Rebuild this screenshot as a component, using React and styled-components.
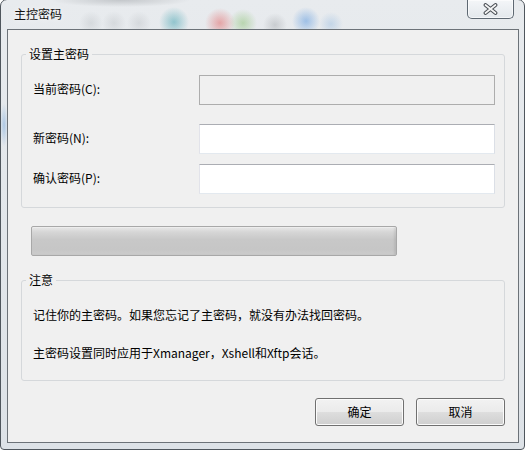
import React from "react";
import styled, { createGlobalStyle } from "styled-components";

const GlobalStyle = createGlobalStyle`
  html, body {
    margin: 0;
    padding: 0;
    overflow: hidden;
    background: #ffffff;
  }
  body {
    font-family: "Noto Sans CJK SC", "Liberation Sans", sans-serif;
    font-size: 12px;
    color: #000000;
  }
`;

const CloseGlyph = () => (
  <svg width="15" height="12" viewBox="0 0 15 12">
    <path d="M2.5 2 L12.5 10 M12.5 2 L2.5 10" stroke="#4a4f55" strokeWidth="3.8" strokeLinecap="round" fill="none" />
    <path d="M2.5 2 L12.5 10 M12.5 2 L2.5 10" stroke="#f6f6f6" strokeWidth="1.7" strokeLinecap="round" fill="none" />
  </svg>
);

const App = () => {
  return (
    <>
      <GlobalStyle />
      <Window>
        <TitleBar>
          <Title>主控密码</Title>
          <CloseButton>
            <CloseGlyph />
          </CloseButton>
        </TitleBar>
        <Client>
          <GroupBox>
            <Legend>设置主密码</Legend>
            <GroupBody>
              <Row>
                <Label>当前密码(C):</Label>
                <Input type="password" disabled />
              </Row>
              <Row $gap={19}>
                <Label>新密码(N):</Label>
                <Input type="password" />
              </Row>
              <Row $gap={10}>
                <Label>确认密码(P):</Label>
                <Input type="password" />
              </Row>
            </GroupBody>
          </GroupBox>
          <Strength />
          <GroupBox $top={16}>
            <Legend>注意</Legend>
            <NoteBody>
              <Note>记住你的主密码。如果您忘记了主密码，就没有办法找回密码。</Note>
              <Note $gap={22}>主密码设置同时应用于Xmanager，Xshell和Xftp会话。</Note>
            </NoteBody>
          </GroupBox>
          <Buttons>
            <Button>确定</Button>
            <Button>取消</Button>
          </Buttons>
        </Client>
      </Window>
    </>
  );
};

const Window = styled.div`
  width: 525px;
  height: 451px;
  margin-top: -1px;
  box-sizing: border-box;
  border: 1px solid #4f565d;
  border-radius: 7px 7px 4px 4px;
  padding: 0 5px 6px 6px;
  display: flex;
  flex-direction: column;
  background:
    radial-gradient(circle 15px at 173px 22px, rgba(40, 150, 165, 0.45), transparent),
    radial-gradient(circle 15px at 219px 23px, rgba(225, 80, 80, 0.45), transparent),
    radial-gradient(circle 14px at 242px 23px, rgba(120, 185, 90, 0.42), transparent),
    radial-gradient(circle 12px at 274px 25px, rgba(120, 125, 130, 0.28), transparent),
    radial-gradient(circle 14px at 305px 21px, rgba(70, 140, 220, 0.45), transparent),
    radial-gradient(circle 12px at 330px 24px, rgba(120, 170, 220, 0.32), transparent),
    radial-gradient(circle 12px at 90px 23px, rgba(150, 155, 160, 0.22), transparent),
    radial-gradient(circle 12px at 113px 23px, rgba(150, 155, 160, 0.22), transparent),
    radial-gradient(circle 12px at 138px 23px, rgba(150, 155, 160, 0.22), transparent),
    radial-gradient(ellipse 70px 7px at 120px 0px, rgba(110, 115, 120, 0.3), transparent),
    radial-gradient(ellipse 4px 22px at 3px 125px, rgba(90, 150, 215, 0.4), transparent),
    linear-gradient(180deg, #e8ebee 0%, #e3e7eb 40%, #dde2e7 100%);
`;

const TitleBar = styled.div`
  height: 29px;
  flex-shrink: 0;
  display: flex;
  justify-content: space-between;
  align-items: flex-start;
  padding-left: 7px;
`;

const Title = styled.div`
  align-self: center;
  padding-bottom: 1px;
  font-size: 12px;
  line-height: 16px;
  color: #111111;
  text-shadow: 0 0 6px rgba(255, 255, 255, 0.9);
`;

const CloseButton = styled.div`
  width: 47px;
  height: 19px;
  box-sizing: border-box;
  margin-right: 5px;
  border: 1px solid #5e6872;
  border-top: none;
  border-radius: 0 0 5px 5px;
  background: linear-gradient(180deg, rgba(246, 248, 250, 0.85) 0%, rgba(226, 231, 236, 0.8) 100%);
  box-shadow: inset 0 0 0 1px rgba(255, 255, 255, 0.6);
  display: flex;
  align-items: center;
  justify-content: center;
`;

const Client = styled.div`
  flex: 1;
  display: flex;
  flex-direction: column;
  border: 1px solid #6c7278;
  background: #f0f0f0;
  padding: 16px 13px 0 13px;
`;

const GroupBox = styled.fieldset`
  margin: ${(p) => p.$top || 0}px 0 0 0;
  padding: 0;
  border: 1px solid #d5d8db;
  border-radius: 3px;
  min-width: 0;
`;

const Legend = styled.legend`
  margin-left: 4px;
  padding: 0 3px;
  font-size: 12px;
  line-height: 16px;
  color: #000000;
`;

const GroupBody = styled.div`
  padding: 13px 9px 13px 11px;
`;

const Row = styled.div`
  display: flex;
  align-items: center;
  justify-content: space-between;
  margin-top: ${(p) => p.$gap || 0}px;
`;

const Label = styled.span`
  font-size: 12px;
  line-height: 16px;
  padding-bottom: 3px;
`;

const Input = styled.input`
  width: 296px;
  height: 30px;
  box-sizing: border-box;
  margin: 0;
  padding: 0 4px;
  border: 1px solid;
  border-color: #abadb3 #dbdfe6 #e3e9ef #e2e3ea;
  background: #ffffff;
  outline: none;

  &:disabled {
    background: #f0f0f0;
    border-color: #adadad;
  }
`;

const Strength = styled.div`
  width: 366px;
  height: 30px;
  box-sizing: border-box;
  margin: 18px 0 0 10px;
  border: 1px solid #a8a8a8;
  border-radius: 2px;
  background: linear-gradient(180deg, #e9e9e9 0%, #d6d6d6 18%, #c8c8c8 45%, #c6c6c6 80%, #cdcdcd 100%);
  box-shadow: inset -2px 0 2px rgba(0, 0, 0, 0.08), inset 0 1px 0 #f2f2f2;
`;

const NoteBody = styled.div`
  padding: 19px 9px 19px 11px;
`;

const Note = styled.div`
  font-size: 12px;
  line-height: 16px;
  margin-top: ${(p) => p.$gap || 0}px;
  white-space: nowrap;
`;

const Buttons = styled.div`
  display: flex;
  justify-content: flex-end;
  gap: 12px;
  margin-top: 17px;
`;

const Button = styled.button`
  width: 89px;
  height: 28px;
  box-sizing: border-box;
  margin: 0;
  padding: 0 0 2px;
  border: 1px solid #707070;
  border-radius: 3px;
  background: linear-gradient(180deg, #f2f2f2 0%, #ebebeb 48%, #dddddd 52%, #cfcfcf 100%);
  box-shadow: inset 0 0 0 1px #fbfbfb;
  font-family: "Noto Sans CJK SC", "Liberation Sans", sans-serif;
  font-size: 12px;
  color: #000000;
`;

export default App;
